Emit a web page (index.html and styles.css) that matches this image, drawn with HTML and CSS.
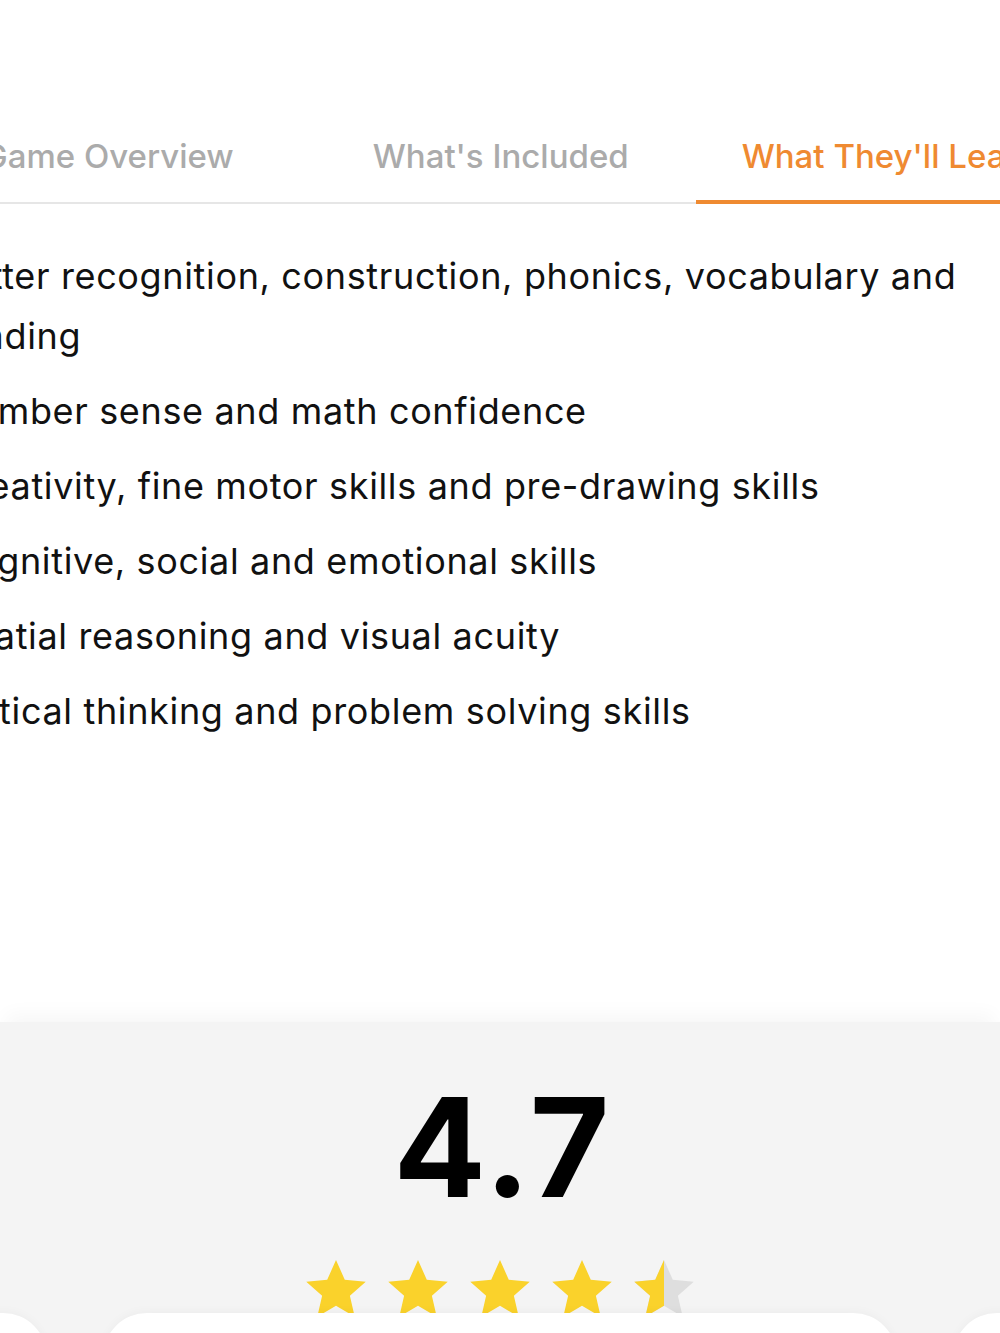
FILE: index.html
```html
<!DOCTYPE html>
<html lang="en">
<head>
<meta charset="utf-8">
<title>What They'll Learn</title>
<link rel="stylesheet" href="styles.css">
</head>
<body>
<div class="page">
  <section class="details">
    <nav class="tabs">
      <div class="tab tab-overview">Game Overview</div>
      <div class="tab tab-included">What's Included</div>
      <div class="tab tab-learn active">What They'll Learn</div>
    </nav>
    <ul class="learn-list">
      <li>Letter recognition, construction, phonics, vocabulary and reading</li>
      <li>Number sense and math confidence</li>
      <li>Creativity, fine motor skills and pre-drawing skills</li>
      <li>Cognitive, social and emotional skills</li>
      <li>Spatial reasoning and visual acuity</li>
      <li>Critical thinking and problem solving skills</li>
    </ul>
  </section>
  <section class="ratings">
    <div class="score">4.7</div>
    <div class="stars">
      <svg class="star" viewBox="0 0 24 24"><path class="full" d="M12 1.8l3.1 6.9 7.4.7-5.6 5 1.7 7.4L12 17.9l-6.6 3.9 1.7-7.4-5.6-5 7.4-.7z"/></svg>
      <svg class="star" viewBox="0 0 24 24"><path class="full" d="M12 1.8l3.1 6.9 7.4.7-5.6 5 1.7 7.4L12 17.9l-6.6 3.9 1.7-7.4-5.6-5 7.4-.7z"/></svg>
      <svg class="star" viewBox="0 0 24 24"><path class="full" d="M12 1.8l3.1 6.9 7.4.7-5.6 5 1.7 7.4L12 17.9l-6.6 3.9 1.7-7.4-5.6-5 7.4-.7z"/></svg>
      <svg class="star" viewBox="0 0 24 24"><path class="full" d="M12 1.8l3.1 6.9 7.4.7-5.6 5 1.7 7.4L12 17.9l-6.6 3.9 1.7-7.4-5.6-5 7.4-.7z"/></svg>
      <svg class="star" viewBox="0 0 24 24">
        <defs><clipPath id="halfclip"><rect x="0" y="0" width="12" height="24"/></clipPath></defs>
        <path class="empty" d="M12 1.8l3.1 6.9 7.4.7-5.6 5 1.7 7.4L12 17.9l-6.6 3.9 1.7-7.4-5.6-5 7.4-.7z"/>
        <path class="full" clip-path="url(#halfclip)" d="M12 1.8l3.1 6.9 7.4.7-5.6 5 1.7 7.4L12 17.9l-6.6 3.9 1.7-7.4-5.6-5 7.4-.7z"/>
      </svg>
    </div>
    <div class="cards">
      <div class="card card-side"></div>
      <div class="card card-main"></div>
      <div class="card card-side"></div>
    </div>
  </section>
</div>
</body>
</html>
```

FILE: styles.css
```css
* { box-sizing: border-box; }
html, body {
  margin: 0;
  padding: 0;
  background: #ffffff;
  font-family: Inter, "Noto Sans", "Liberation Sans", sans-serif;
  overflow: hidden;
}
.page {
  width: 1000px;
  height: 1333px;
  overflow: hidden;
  display: flex;
  flex-direction: column;
}
.details {
  padding-top: 118px;
  height: 1022px;
  flex: none;
}
.tabs {
  display: flex;
  margin-left: -39px;
  width: 1140px;
  border-bottom: 2px solid #e6e6e6;
  height: 86px;
}
.tab {
  font-size: 33px;
  font-weight: 500;
  color: #ababab;
  padding: 18px 46px 0;
  height: 86px;
  white-space: nowrap;
}
.tab-overview { padding-left: 22px; padding-right: 93px; }
.tab-included { padding-left: 46px; padding-right: 67px; }
.tab.active {
  color: #ef8a31;
  border-bottom: 4px solid #ef8a31;
  margin-bottom: -2px;
}
.learn-list {
  list-style: none;
  margin: 42px 0 0 -52px;
  padding: 0;
  width: 1040px;
  display: flex;
  flex-direction: column;
  gap: 15px;
}
.learn-list li {
  font-size: 36px;
  line-height: 60px;
  letter-spacing: 0.65px;
  color: #111111;
  font-weight: 400;
}
.ratings {
  flex: 1;
  background: #f4f4f4;
  position: relative;
  display: flex;
  flex-direction: column;
  align-items: center;
  box-shadow: 0 -14px 18px -6px rgba(0,0,0,0.035);
}
.score {
  margin-top: 45px;
  margin-left: 6px;
  font-size: 137px;
  font-weight: 700;
  line-height: 160px;
  color: #000000;
  letter-spacing: 3px;
}
.stars {
  margin-top: 28px;
  display: flex;
  gap: 14px;
  margin-left: 0;
}
.star { width: 68px; height: 68px; }
.star .full { fill: #fad22b; }
.star .empty { fill: #dedede; }
.cards {
  position: absolute;
  left: -747px;
  top: 291px;
  display: flex;
  gap: 56px;
}
.card {
  height: 120px;
  background: #ffffff;
  border-radius: 44px;
  box-shadow: 0 -2px 10px rgba(0,0,0,0.03);
}
.card-side { width: 794px; }
.card-main { width: 794px; }
```
